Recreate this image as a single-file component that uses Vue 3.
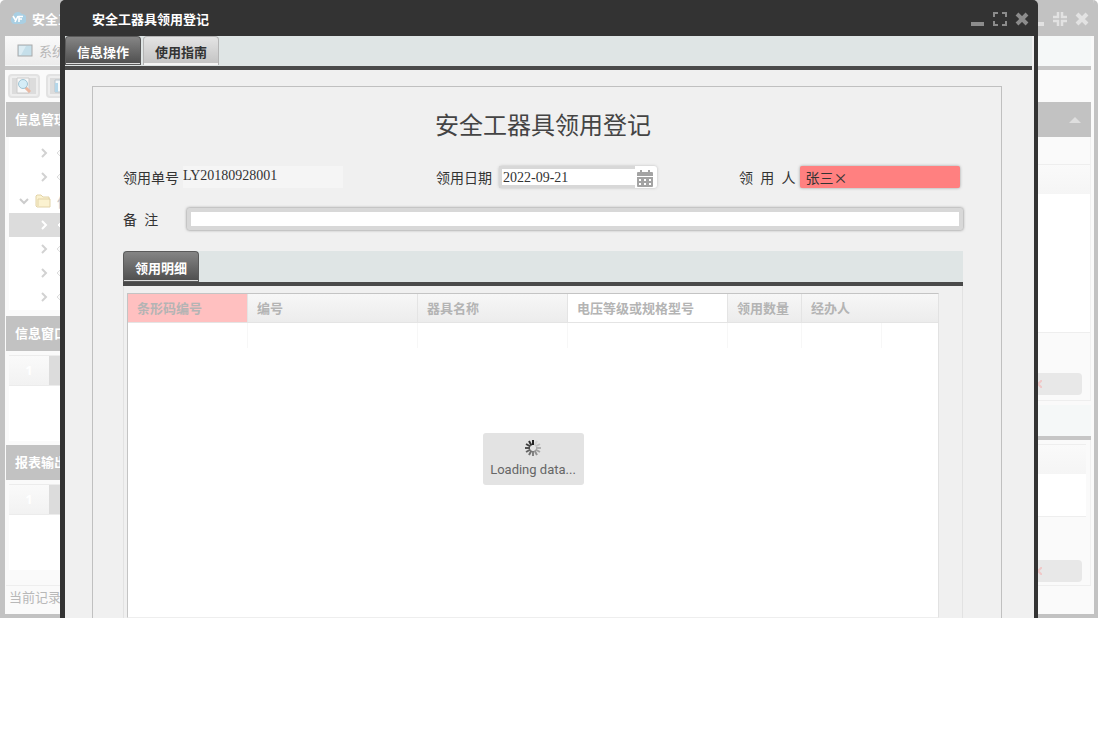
<template>
  <div class="desktop">
    <!-- ventana principal, atenuada detrás del diálogo -->
    <div class="main-window">
      <header class="main-title">
        <svg class="logo" width="16" height="14" viewBox="0 0 16 14">
          <path d="M4 13a4 4 0 0 1-1-7.500A5 5 0 0 1 12 3a4.500 4.500 0 0 1 0 10z" fill="#a9cfe3" />
          <path d="M3 5l2.500 4M8 5l-3 6M9 11V5.500h4M9 8h3" stroke="#fff" stroke-width="1.600" fill="none" />
        </svg>
        <span class="main-name">安全工</span>
        <div class="window-tools faded">
          <button aria-label="Minimizar">
            <svg width="16" height="16" viewBox="0 0 16 16"><path d="M1 11h13v4H1z" fill="currentColor" /></svg>
          </button>
          <button aria-label="Restaurar">
            <svg width="16" height="16" viewBox="0 0 16 16">
              <path d="M6 1v5H1M10 1v5h5M6 15v-5H1M10 15v-5h5" stroke="currentColor" stroke-width="2.500" fill="none" />
            </svg>
          </button>
          <button aria-label="Cerrar">
            <svg width="16" height="16" viewBox="0 0 16 16"><path d="M3 3l10 10M13 3L3 13" stroke="currentColor" stroke-width="4" /></svg>
          </button>
        </div>
      </header>

      <nav class="main-menu">
        <button class="menu-tab">
          <svg width="16" height="14" viewBox="0 0 16 14">
            <rect x="1" y="1" width="14" height="11" fill="#c5dfea" stroke="#aaa" stroke-width="1" />
            <path d="M2 2h7l-5 9H2z" fill="#dcecf3" />
          </svg>
          系统
        </button>
      </nav>

      <div class="main-body">
        <aside class="sidebar">
          <div class="toolbar">
            <button class="tool-btn" aria-label="Buscar">
              <svg width="24" height="18" viewBox="0 0 24 18">
                <path d="M0 1h24v16H0z" fill="#dcdcdc" />
                <path d="M5 1h12v15H5z" fill="#f8f8f8" stroke="#ccc" />
                <path d="M13 10l5 5" stroke="#eab8a2" stroke-width="3" />
                <circle cx="11" cy="7" r="4.500" fill="#d5edf7" stroke="#9fc4d4" />
              </svg>
            </button>
            <button class="tool-btn" aria-label="Listado">
              <svg width="24" height="18" viewBox="0 0 24 18">
                <path d="M0 1h24v16H0z" fill="#dcdcdc" />
                <path d="M5 3h14v12H5z" fill="#f4f8fa" stroke="#b8c4cc" />
                <path d="M5 6h3v9H5z" fill="#b4d7ea" />
              </svg>
            </button>
          </div>

          <h2 class="side-head">信息管理</h2>
          <ul class="tree">
            <li
              v-for="(node, i) in treeNodes"
              :key="i"
              :class="{ selected: node.selected, folder: node.folder }"
            >
              <svg v-if="node.folder" width="10" height="10" viewBox="0 0 10 10">
                <path d="M1 3l4 4 4-4" stroke="#ccc" stroke-width="2" fill="none" />
              </svg>
              <svg v-else width="10" height="10" viewBox="0 0 10 10">
                <path d="M3 1l4 4-4 4" :stroke="node.selected ? '#fff' : '#d2d2d2'" stroke-width="2" fill="none" />
              </svg>
              <svg v-if="node.folder" class="folder-icon" width="16" height="14" viewBox="0 0 16 14">
                <path d="M1 12V2l1-1h4l2 2h6v2h1v8H2z" fill="#fbf2d0" stroke="#e2d3a8" />
                <path d="M3 12V5h12" stroke="#e2d3a8" fill="none" />
              </svg>
              <svg v-else class="leaf-icon" width="12" height="12" viewBox="0 0 12 12">
                <path d="M6 1l5 5-5 5-5-5z" :fill="node.selected ? '#fff' : '#fafafa'" stroke="#ddd" />
              </svg>
              <span v-if="node.folder">信</span>
            </li>
          </ul>

          <h2 class="side-head">信息窗口</h2>
          <div class="side-grid"><span class="idx">1</span><span class="cell"></span></div>

          <h2 class="side-head reports">报表输出</h2>
          <div class="side-grid"><span class="idx">1</span><span class="cell"></span></div>

          <p class="records">当前记录</p>
        </aside>

        <section class="workspace">
          <div class="work-head">
            <svg width="12" height="6" viewBox="0 0 12 6"><path d="M0 6l6-6 6 6z" fill="#dedede" /></svg>
          </div>
          <div class="work-panel">
            <div class="panel-head"></div>
            <div class="panel-rows tall"></div>
            <button class="work-btn" aria-label="Cancelar">
              <svg width="8" height="8" viewBox="0 0 8 8"><path d="M0 0l8 8M8 0L0 8" stroke="#f0c8c8" stroke-width="2" /></svg>
            </button>
          </div>
          <div class="work-tabs"></div>
          <div class="work-panel second">
            <div class="panel-head"></div>
            <div class="panel-rows"></div>
            <button class="work-btn" aria-label="Cerrar detalle">
              <svg width="8" height="8" viewBox="0 0 8 8"><path d="M0 0l8 8M8 0L0 8" stroke="#f0c8c8" stroke-width="2" /></svg>
            </button>
          </div>
        </section>
      </div>
    </div>

    <!-- diálogo -->
    <div class="dialog">
      <header class="dialog-title">
        <span>安全工器具领用登记</span>
        <div class="window-tools">
          <button aria-label="Minimizar diálogo">
            <svg width="16" height="16" viewBox="0 0 16 16"><path d="M1 11h13v4H1z" fill="currentColor" /></svg>
          </button>
          <button aria-label="Maximizar diálogo">
            <svg width="16" height="16" viewBox="0 0 16 16">
              <path d="M2 6V2h4M10 2h4v4M14 10v4h-4M6 14H2v-4" stroke="currentColor" stroke-width="2" fill="none" />
            </svg>
          </button>
          <button aria-label="Cerrar diálogo">
            <svg width="16" height="16" viewBox="0 0 16 16"><path d="M3 3l10 10M13 3L3 13" stroke="currentColor" stroke-width="4" /></svg>
          </button>
        </div>
      </header>

      <div class="dialog-body">
        <nav class="tabs">
          <button
            v-for="tab in tabs"
            :key="tab"
            class="tab"
            :class="{ active: tab === activeTab }"
            @click="activeTab = tab"
          >{{ tab }}</button>
        </nav>

        <form class="sheet" @submit.prevent>
          <h1>安全工器具领用登记</h1>

          <div class="form-row">
            <div class="field">
              <label for="order">领用单号</label>
              <input id="order" v-model="form.order" class="readonly" readonly />
            </div>
            <div class="field">
              <label for="date">领用日期</label>
              <div class="date-box">
                <input id="date" v-model="form.date" />
                <button type="button" aria-label="Elegir fecha">
                  <svg width="16" height="17" viewBox="0 0 16 17">
                    <path d="M1 2h14a1 1 0 0 1 1 1v3H0V3a1 1 0 0 1 1-1z" fill="#a3a3a3" />
                    <path d="M4 0v4M12 0v4" stroke="#a3a3a3" stroke-width="2" />
                    <path d="M0 7h16v9a1 1 0 0 1-1 1H1a1 1 0 0 1-1-1z" fill="#a3a3a3" />
                    <path d="M2 9h2v2H2zM7 9h2v2H7zM12 9h2v2h-2zM2 13h2v2H2zM7 13h2v2H7zM12 13h2v2h-2z" fill="#fff" />
                  </svg>
                </button>
              </div>
            </div>
            <div class="field">
              <label for="person">领&nbsp;&nbsp;用&nbsp;&nbsp;人</label>
              <input id="person" v-model="form.person" class="required" />
            </div>
          </div>

          <div class="field remark">
            <label for="remark">备&nbsp;&nbsp;注</label>
            <input id="remark" v-model="form.remark" />
          </div>

          <nav class="tabs detail-tabs">
            <button type="button" class="tab active">领用明细</button>
          </nav>

          <div class="detail">
            <div class="grid">
              <table>
                <colgroup>
                  <col v-for="(col, i) in columns" :key="i" :style="{ width: col.width }" />
                </colgroup>
                <thead>
                  <tr>
                    <th
                      v-for="(col, i) in columns"
                      :key="i"
                      :class="col.kind"
                    >{{ col.title }}</th>
                  </tr>
                </thead>
                <tbody>
                  <tr><td v-for="(col, i) in columns" :key="i"></td></tr>
                </tbody>
              </table>
              <div class="loading">
                <svg width="16" height="16" viewBox="0 0 16 16">
                  <path
                    v-for="n in 12"
                    :key="n"
                    d="M8 0v5"
                    stroke="#222"
                    stroke-width="2"
                    :opacity="n / 12"
                    :transform="`rotate(${n * 30} 8 8)`"
                  />
                </svg>
                <span>Loading data...</span>
              </div>
            </div>
          </div>
        </form>
      </div>
    </div>
  </div>
</template>

<script setup>
import { reactive, ref } from 'vue'

const tabs = ['信息操作', '使用指南']
const activeTab = ref('信息操作')

const form = reactive({
  order: 'LY20180928001',
  date: '2022-09-21',
  person: '张三×',
  remark: ''
})

const columns = [
  { title: '条形码编号', width: '120px', kind: 'key' },
  { title: '编号', width: '170px' },
  { title: '器具名称', width: '150px' },
  { title: '电压等级或规格型号', width: '160px', kind: 'editable' },
  { title: '领用数量', width: '74px' },
  { title: '经办人', width: '80px', kind: 'open' },
  { title: '', width: 'auto', kind: 'open' }
]

const treeNodes = [
  {},
  {},
  { folder: true },
  { selected: true },
  {},
  {},
  {}
]
</script>

<style>
body {
  margin: 0;
  background: #fff;
}
</style>

<style scoped>
.desktop {
  display: grid;
  font-family: 'Open Sans', 'Noto Sans CJK SC', sans-serif;
  font-size: 13px;
}

.desktop * {
  box-sizing: border-box;
}

button,
input {
  font-family: inherit;
  margin: 0;
}

button {
  border: none;
  background: none;
  padding: 0;
  color: inherit;
  cursor: pointer;
}

svg {
  display: block;
  flex-shrink: 0;
}

.main-window,
.dialog {
  grid-area: 1 / 1;
  min-width: 0;
}

/* ─── Ventana principal ─────────────────────────────────── */
.main-window {
  display: flex;
  flex-direction: column;
  margin-right: 1px;
  border: solid #c2c2c2;
  border-width: 0 4px 4px 5px;
  border-radius: 5px 5px 0 0;
  background: #fafafa;
  overflow: hidden;
}

.main-title {
  display: flex;
  align-items: center;
  height: 36px;
  padding-left: 5px;
  background: #c2c2c2;
  color: #fff;
}

.main-name {
  margin-left: 6px;
  font-weight: 700;
}

.window-tools {
  display: flex;
  gap: 6px;
  margin-left: auto;
  padding-top: 2px;
  color: #8c8c8c;
}

.window-tools.faded {
  color: #e2e2e2;
  margin-right: 4px;
}

.main-menu {
  height: 34px;
  margin: 0 3px 1px 0;
  border-bottom: 4px solid #c6c6c6;
  background: #f5f8f8;
}

.menu-tab {
  display: flex;
  align-items: center;
  gap: 6px;
  width: 140px;
  height: 29px;
  padding-left: 12px;
  background: linear-gradient(#fafafa, #ececec);
  color: #b8b8b8;
  font-size: 13px;
}

.main-body {
  flex: 1;
  display: flex;
  justify-content: space-between;
}

.sidebar {
  width: 180px;
  padding-left: 1px;
}

.toolbar {
  display: flex;
  gap: 6px;
  height: 31px;
  padding: 3px 2px;
}

.tool-btn {
  display: flex;
  align-items: center;
  justify-content: center;
  width: 32px;
  height: 24px;
  border: 2px solid #e2e2e2;
  border-radius: 4px;
  background: #eee;
}

.side-head {
  height: 35px;
  margin: 0;
  padding-left: 9px;
  background: #c2c2c2;
  color: #fff;
  font-size: 13px;
  line-height: 34px;
}

.tree {
  margin: 0 0 6px 3px;
  padding: 4px 0 2px;
  height: 173px;
  background: #fff;
  list-style: none;
}

.tree li {
  display: flex;
  align-items: center;
  gap: 7px;
  height: 24px;
  padding-left: 30px;
  color: #c4c4c4;
}

.tree li.folder {
  padding-left: 10px;
  gap: 6px;
}

.tree li.selected {
  background: #dcdcdc;
}

.side-grid {
  display: flex;
  align-items: flex-start;
  height: 86px;
  margin: 4px 0 4px 3px;
  background: #fff;
}

.idx,
.cell {
  height: 31px;
  border: solid #ececec;
  border-width: 1px 0;
  background: #f8f8f8;
}

.idx {
  width: 40px;
  color: #fff;
  font-weight: 700;
  line-height: 28px;
  text-align: center;
  background: linear-gradient(#fafafa, #f2f2f2);
}

.cell {
  flex: 1;
  background: #dcdcdc;
}

.records {
  margin: 15px 0 0;
  padding: 0 3px;
  border-top: 1px solid #eee;
  color: #b8b8b8;
  line-height: 22px;
}

.workspace {
  flex: 1;
  margin: 31px 3px 0 0;
}

.work-head {
  display: flex;
  align-items: center;
  justify-content: flex-end;
  height: 35px;
  padding-right: 10px;
  background: #c2c2c2;
}

.work-panel {
  padding: 27px 0 5px;
  border-right: 1px solid #f0f0f0;
  border-bottom: 1px solid #eee;
}

.panel-head {
  height: 30px;
  border-top: 1px solid #eee;
  background: linear-gradient(#fafafa, #f5f5f5);
}

.panel-rows {
  height: 43px;
  margin-bottom: 43px;
  border-bottom: 1px solid #eee;
  background: #fff;
}

.panel-rows.tall {
  height: 139px;
  margin-bottom: 40px;
}

.work-btn {
  display: flex;
  align-items: center;
  justify-content: flex-end;
  width: 120px;
  height: 22px;
  margin: 0 8px 0 auto;
  padding-right: 40px;
  border-radius: 4px;
  background: #e8e8e8;
}

.work-tabs {
  height: 35px;
  margin-top: 4px;
  border-bottom: 4px solid #c6c6c6;
  background: #f5f8f8;
}

.work-panel.second {
  padding: 4px 0 3px;
}

.second .panel-head,
.second .panel-rows {
  margin-right: 4px;
}

/* ─── Diálogo ───────────────────────────────────────────── */
.dialog {
  z-index: 1;
  margin: 0 61px 0 60px;
  border: solid #333;
  border-width: 0 4px 0 5px;
  border-radius: 5px 5px 0 0;
  background: #333;
}

.dialog-title {
  display: flex;
  align-items: center;
  height: 36px;
  padding: 0 4px 0 27px;
  color: #fff;
  font-weight: 700;
}

.dialog-body {
  background: #f0f0f0;
}

.tabs {
  display: flex;
  gap: 2px;
  height: 34px;
  margin-right: 2px;
  border-bottom: 4px solid #4a4a4a;
  background: #dfe5e5;
}

.tab {
  height: 29px;
  padding: 0 11px;
  border: 1px solid #b4b4b4;
  border-bottom: none;
  border-radius: 4px 4px 0 0;
  background: linear-gradient(#e4e4e4, #c2c2c2);
  box-shadow: inset 0 -2px 0 #f4f4f4;
  color: #333;
  font-size: 13px;
  font-weight: 700;
}

.tab.active {
  border-color: #5a5a5a;
  background: linear-gradient(#858585, #4c4c4c);
  box-shadow: inset 0 -1px 0 #5a5a5a, inset 0 -2px 0 #ddd;
  color: #fff;
}

.sheet {
  margin: 16px 32px 0 27px;
  padding: 18px 38px 0 30px;
  border: 1px solid #c0c0c0;
  border-bottom: none;
}

h1 {
  margin: 0;
  color: #444;
  font-size: 24px;
  font-weight: 400;
  line-height: 40px;
  text-align: center;
}

.form-row {
  display: grid;
  grid-template-columns: 313fr 303fr 224fr;
  margin-top: 20px;
}

.field {
  display: flex;
  align-items: center;
  gap: 4px;
  height: 24px;
  color: #333;
  font-size: 14px;
}

.field label {
  white-space: nowrap;
}

.field input {
  width: 160px;
  height: 22px;
  border: none;
  color: #333;
  font-family: 'Liberation Serif', 'Noto Sans CJK SC', serif;
  font-size: 14px;
  outline: none;
}

.field .readonly {
  padding: 0 0 2px;
  background: #f5f5f5;
}

.field .required {
  padding: 0 6px;
  border-radius: 2px;
  background: #ff8080;
  box-shadow: 0 0 3px #999;
  font-family: 'Noto Sans CJK SC', sans-serif;
}

.date-box {
  display: flex;
  width: 158px;
  margin-left: 3px;
  border-radius: 3px;
  background: #fff;
  box-shadow: 0 0 3px #bbb;
}

.field .date-box input {
  width: 136px;
  padding: 2px 0 0 1px;
  border: solid #d8d8d8;
  border-width: 3px 0 3px 3px;
}

.date-box button {
  display: flex;
  align-items: center;
  padding: 2px 0 0 2px;
}

.remark {
  margin-top: 18px;
}

.remark label {
  width: 60px;
}

.field.remark input {
  flex: 1;
  border: 4px solid #d8d8d8;
  border-radius: 2px;
  box-shadow: 0 0 3px #777;
}

.detail-tabs {
  height: 35px;
  margin: 20px 0 0;
}

.detail-tabs .tab {
  height: 31px;
}

.detail {
  padding: 7px 23px 0 3px;
  border: solid #e2e2e2;
  border-width: 0 1px;
}

.grid {
  height: 325px;
  border: 1px solid #c4c4c4;
  border-right-color: #e2e2e2;
  border-bottom-color: #eee;
  background: #fff;
}

table {
  width: 100%;
  border-collapse: separate;
  border-spacing: 0;
  table-layout: fixed;
}

th {
  height: 29px;
  padding: 0 0 0 9px;
  border: solid #e4e4e4;
  border-width: 0 1px 1px 0;
  background: linear-gradient(#f7f7f7, #ececec);
  color: #b4b4b4;
  font-size: 13px;
  font-weight: 700;
  line-height: 20px;
  text-align: left;
  white-space: nowrap;
}

th.key {
  background: #ffc0c0;
}

th.editable {
  background: #fff;
}

th.open {
  border-right: none;
}

td {
  height: 25px;
  padding: 0;
  border-right: 1px solid #f7f7f7;
}

td:last-child {
  border-right: none;
}

.loading {
  display: flex;
  flex-direction: column;
  align-items: center;
  gap: 2px;
  width: 101px;
  margin: 85px auto 0;
  padding: 7px 0 3px;
  border-radius: 3px;
  background: #e3e3e3;
  color: #666;
  font-family: Roboto, sans-serif;
  font-size: 13px;
  line-height: 24px;
}
</style>
